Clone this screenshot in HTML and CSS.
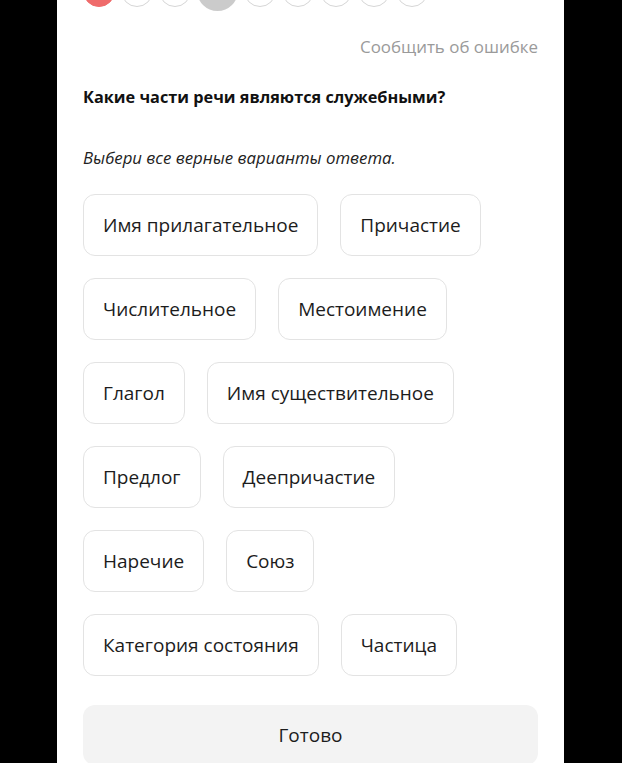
FILE: index.html
```html
<!DOCTYPE html>
<html>

<head>
    <meta http-equiv="content-type" content="text/html; charset=UTF-8">
    <title>
        Служебные части речи
    </title>
    <link rel="stylesheet" href="styles.css">
</head>

<body>
    <div class="panel">
        <div class="progress">
            <span class="dot done"></span>
            <span class="dot"></span>
            <span class="dot"></span>
            <span class="dot current"></span>
            <span class="dot"></span>
            <span class="dot"></span>
            <span class="dot"></span>
            <span class="dot"></span>
            <span class="dot"></span>
        </div>

        <div class="report">Сообщить об ошибке</div>

        <div class="question">Какие части речи являются служебными?</div>
        <div class="hint">Выбери все верные варианты ответа.</div>

        <div class="options">
            <div class="chip">Имя прилагательное</div>
            <div class="chip">Причастие</div>
            <div class="chip">Числительное</div>
            <div class="chip">Местоимение</div>
            <div class="chip">Глагол</div>
            <div class="chip">Имя существительное</div>
            <div class="chip">Предлог</div>
            <div class="chip">Деепричастие</div>
            <div class="chip">Наречие</div>
            <div class="chip">Союз</div>
            <div class="chip">Категория состояния</div>
            <div class="chip">Частица</div>
        </div>

        <div class="done-btn">Готово</div>
    </div>
</body>

</html>
```

FILE: styles.css
```css
body {
    margin: 0;
    background: #000;
    font-family: "Open Sans", "Noto Sans", sans-serif;
    color: #1c1c1c;
}

.panel {
    width: 455px;
    margin-left: 57px;
    padding: 0 26px;
    min-height: 763px;
    background: #fff;
    overflow: hidden;
}

.progress {
    display: flex;
    align-items: center;
    gap: 6px;
    height: 41px;
    margin-top: -30px;
}

.dot {
    width: 30px;
    height: 30px;
    border: 1px solid #d6d6d6;
    border-radius: 50%;
    background: #fff;
}

.dot.done {
    border-color: #ef6b6b;
    background: #ef6b6b;
}

.dot.current {
    width: 41px;
    height: 41px;
    border: 0;
    background: #cbcbcb;
}

.report {
    margin-top: 24px;
    line-height: 24px;
    font-size: 16.9px;
    color: #9a9a9a;
    text-align: right;
}

.question {
    margin-top: 26px;
    line-height: 24px;
    font-size: 16.3px;
    font-weight: 700;
    color: #111;
}

.hint {
    margin-top: 37px;
    line-height: 24px;
    font-size: 16.8px;
    font-style: italic;
    color: #222;
}

.options {
    display: flex;
    flex-wrap: wrap;
    margin-top: 24px;
}

.chip {
    height: 60px;
    line-height: 60px;
    padding: 0 19px;
    margin: 0 22px 22px 0;
    border: 1px solid #e3e3e3;
    border-radius: 12px;
    font-size: 19px;
    white-space: nowrap;
}

.done-btn {
    margin-top: 7px;
    height: 60px;
    line-height: 60px;
    border-radius: 12px;
    background: #f3f3f3;
    text-align: center;
    font-size: 19px;
}
```
